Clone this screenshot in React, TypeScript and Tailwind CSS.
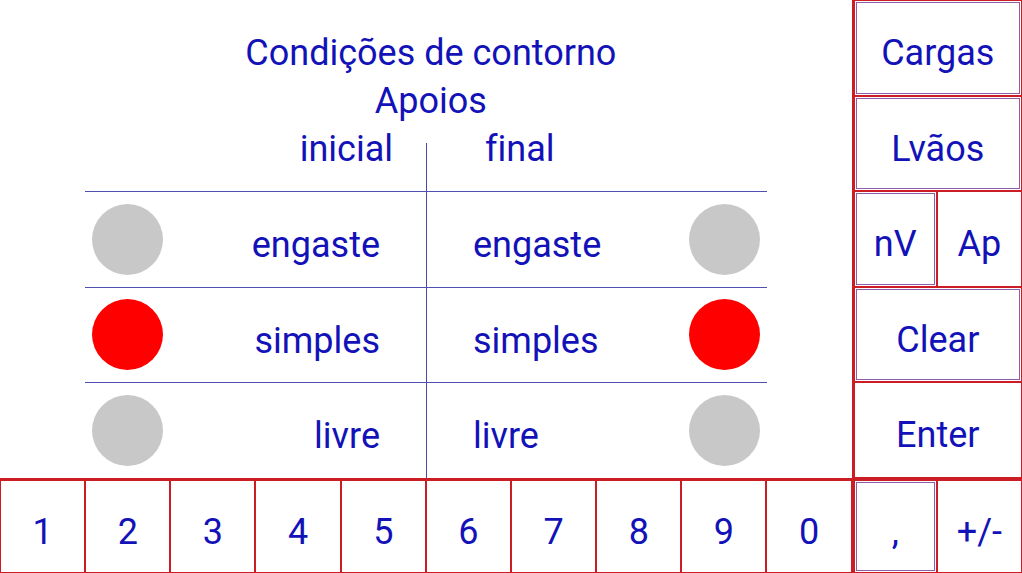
import React from 'react';

const red = 'border-[#cc1c24]';

function Dot({ on }: { on?: boolean }) {
    return (
        <div className="flex w-[85px] items-center justify-center">
            <div className={`h-[71px] w-[71px] rounded-full ${on ? 'bg-[#ff0000]' : 'bg-[#c8c8c8]'}`} />
        </div>
    );
}

function Row({ label, on }: { label: string; on?: boolean }) {
    return (
        <div className="flex h-[95.5px] border-t border-[#5050b0]">
            <Dot on={on} />
            <div className="flex w-[256px] items-center justify-end pr-[46px] pt-[12px]">{label}</div>
            <div className="w-px bg-[#4848a8]" />
            <div className="flex flex-1 items-center pl-[46px] pt-[12px]">{label}</div>
            <Dot on={on} />
        </div>
    );
}

function Key({ label, boxed, className = '' }: { label: string; boxed?: boolean; className?: string }) {
    return (
        <div className={`flex border-[1.5px] ${red} ${className}`}>
            <div
                className={`m-px flex flex-1 items-center justify-center pt-[11px] ${boxed ? 'border border-[#8c5ea8]' : 'border border-transparent'}`}
            >
                {label}
            </div>
        </div>
    );
}

export default function App() {
    const digits = ['1', '2', '3', '4', '5', '6', '7', '8', '9', '0'];

    return (
        <div
            className="grid h-[573px] w-[1022px] grid-cols-12 grid-rows-6 bg-white text-[36px] leading-none text-[#1212b8] [font-variant-ligatures:none]"
            style={{ fontFamily: 'Roboto, "Noto Sans", sans-serif' }}
        >
            <div className="col-span-10 row-span-5 flex flex-col">
                <div className="flex flex-col items-center pt-[29px] pl-[10px]">
                    <div className="flex h-[48px] items-center">Condições de contorno</div>
                    <div className="flex h-[48px] items-center">Apoios</div>
                </div>
                <div className="mx-[85px] flex h-[66px]">
                    <div className="flex w-[341px] items-start justify-end pr-[33px] pt-[6px]">inicial</div>
                    <div className="mt-[18px] w-px bg-[#4848a8]" />
                    <div className="flex flex-1 items-start pl-[58px] pt-[6px]">final</div>
                </div>
                <div className="mx-[85px] flex flex-col">
                    <Row label="engaste" />
                    <Row label="simples" on />
                    <Row label="livre" />
                </div>
            </div>

            <Key label="Cargas" boxed className="col-span-2 border-l-[3px]" />
            <Key label="Lvãos" boxed className="col-span-2 col-start-11 border-l-[3px]" />
            <Key label="nV" boxed className="col-start-11 border-l-[3px]" />
            <Key label="Ap" />
            <Key label="Clear" boxed className="col-span-2 col-start-11 border-l-[3px]" />
            <Key label="Enter" className="col-span-2 col-start-11 border-l-[3px]" />

            {digits.map((d) => (
                <Key key={d} label={d} className="border-t-[3px]" />
            ))}
            <Key label="," boxed className="border-l-[3px] border-t-[3px]" />
            <Key label="+/-" className="border-t-[3px]" />
        </div>
    );
}
